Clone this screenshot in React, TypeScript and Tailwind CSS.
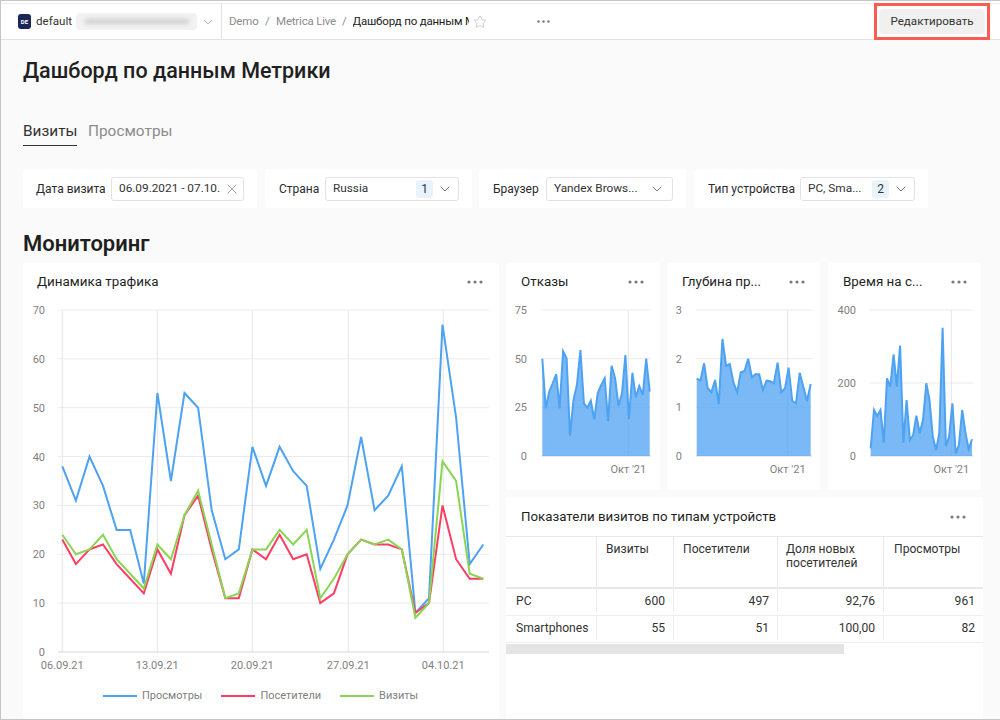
import React from "react";
import { ChevronDown, Star, X } from "lucide-react";

const views = [38,31,40,34,25,25,14,53,35,53,50,29,19,21,42,34,42,37,34,17,23,30,44,29,32,38,8,11,67,48,18,22];
const visitors = [23,18,21,22,18,15,12,21,16,28,32,21,11,11,21,19,24,19,20,10,12,20,23,22,22,21,8,10,30,19,15,15];
const visits = [24,20,21,24,19,16,13,22,19,28,33,22,11,12,21,21,25,22,25,11,15,20,23,22,23,21,7,10,39,35,16,15];

const lineX = (i: number) => 62.3 + i * 13.58;
const lineY = (v: number) => 652 - v * 4.886;
const linePts = (d: number[]) => d.map((v, i) => `${lineX(i).toFixed(1)},${lineY(v).toFixed(1)}`).join(" ");

function Dots({ className = "" }: { className?: string }) {
  return (
    <svg width="16" height="4" viewBox="0 0 16 4" className={className}>
      <circle cx="2" cy="2" r="1.6" fill="#7a7a7a" />
      <circle cx="8" cy="2" r="1.6" fill="#7a7a7a" />
      <circle cx="14" cy="2" r="1.6" fill="#7a7a7a" />
    </svg>
  );
}

function CardHead({ title, pl, pr }: { title: string; pl: string; pr: string }) {
  return (
    <div className={`flex h-[37px] items-center justify-between pt-[1px] ${pl} ${pr}`}>
      <span className="whitespace-nowrap text-[13.4px] text-[#1f1f1f]">{title}</span>
      <Dots />
    </div>
  );
}

function LineChart() {
  const ticks = [0, 10, 20, 30, 40, 50, 60, 70];
  const xt: [number, string][] = [[62.3, "06.09.21"], [157.3, "13.09.21"], [252.3, "20.09.21"], [348.3, "27.09.21"], [443.3, "04.10.21"]];
  return (
    <svg width="476" height="386" viewBox="23 300 476 386" className="block">
      {xt.map(([x]) => (
        <line key={x} x1={x} x2={x} y1="310" y2="652" stroke="#e6e6e6" />
      ))}
      {ticks.map((t) => (
        <g key={t}>
          <line x1="58" x2="489" y1={lineY(t)} y2={lineY(t)} stroke={t === 0 ? "#d6d6d6" : "#ebebeb"} />
          <text x="45" y={lineY(t) + 4} textAnchor="end" fontSize="11" fill="#7f7f7f">{t}</text>
        </g>
      ))}
      {xt.map(([x, l]) => (
        <text key={l} x={x} y="669" textAnchor="middle" fontSize="11" fill="#7f7f7f">{l}</text>
      ))}
      <polyline points={linePts(views)} fill="none" stroke="#4da2f1" strokeWidth="2" />
      <polyline points={linePts(visitors)} fill="none" stroke="#ff3d64" strokeWidth="2" />
      <polyline points={linePts(visits)} fill="none" stroke="#8ad554" strokeWidth="2" />
    </svg>
  );
}

function Legend() {
  const items: [string, string][] = [
    ["Просмотры", "bg-[#4da2f1]"],
    ["Посетители", "bg-[#ff3d64]"],
    ["Визиты", "bg-[#8ad554]"],
  ];
  return (
    <div className="flex h-[20px] items-center gap-[19px] pl-[80px]">
      {items.map(([l, c]) => (
        <div key={l} className="flex items-center gap-[5px]">
          <div className={`h-[2px] w-[34px] ${c}`} />
          <span className="text-[11px] text-[#7f7f7f]">{l}</span>
        </div>
      ))}
    </div>
  );
}

type SparkProps = {
  vb: string;
  w: number;
  x0: number;
  x1: number;
  gridL: number;
  gridR: number;
  labelX: number;
  oct: number;
  zy: number[];
  labels: [string, number][];
};

function Spark({ vb, w, x0, x1, gridL, gridR, labelX, oct, zy, labels }: SparkProps) {
  const step = (x1 - x0) / (zy.length - 1);
  const pts = zy.map((z, i) => `${(x0 + i * step).toFixed(1)},${(260 + z / 3).toFixed(1)}`);
  return (
    <svg width={w} height="190" viewBox={vb} className="block">
      {labels.map(([l, y]) => (
        <g key={l}>
          <line x1={gridL} x2={gridR} y1={y} y2={y} stroke={y === 456 ? "#d6d6d6" : "#ebebeb"} />
          <text x={labelX} y={y + 4} textAnchor="end" fontSize="11" fill="#7f7f7f">{l}</text>
        </g>
      ))}
      <line x1={oct} x2={oct} y1="310" y2="456" stroke="#e6e6e6" />
      <polygon points={`${x0},456 ${pts.join(" ")} ${x1},456`} fill="#4da2f1" fillOpacity="0.75" />
      <polyline points={pts.join(" ")} fill="none" stroke="#4da2f1" strokeWidth="2" />
      <text x={oct} y="473" textAnchor="middle" fontSize="11" fill="#7f7f7f">Окт '21</text>
    </svg>
  );
}

function FilterCard({ label, width, ctrl, pl, children }: { label: string; width: string; ctrl: string; pl: string; children: React.ReactNode }) {
  return (
    <div className={`flex h-[39px] items-center justify-between rounded-[3px] bg-white pr-[13px] ${pl} ${width}`}>
      <span className="whitespace-nowrap text-[12px] text-[#2b2b2b]">{label}</span>
      <div className={`flex h-[24px] items-center rounded-[3px] border border-[#e2e2e2] pl-[7px] text-[11.8px] text-[#333] ${ctrl}`}>
        {children}
      </div>
    </div>
  );
}

const Count = ({ n }: { n: number }) => (
  <span className="flex h-[18px] w-[17px] items-center justify-center rounded-[3px] bg-[#e8f3fd] text-[12px] text-[#333]">{n}</span>
);
const Chev = () => <ChevronDown size={16} strokeWidth={1.2} className="text-[#555]" />;

const cols = "grid grid-cols-[91px_77px_104px_106px_99px]";
const rows = [
  ["PC", "600", "497", "92,76", "961"],
  ["Smartphones", "55", "51", "100,00", "82"],
];

export default function App() {
  return (
    <div
      className="flex h-[720px] w-[1000px] flex-col overflow-hidden border-b border-l border-t border-[#c6c6c6] bg-white pt-[2px]"
      style={{ fontFamily: "Roboto, 'Noto Sans', sans-serif" }}
    >
      <header className="flex h-[37px] shrink-0 items-stretch border-b border-t border-b-[#e2e2e2] border-t-[#ececec]">
        <div className="flex w-[221px] shrink-0 items-center border-r border-[#e2e2e2] pl-[17px]">
          <div className="flex h-[15px] w-[13px] items-center justify-center rounded-[3px] bg-[#1b2557] text-[6px] font-bold leading-none text-white">DE</div>
          <span className="ml-[5px] w-[40px] text-[11.6px] text-[#333]">default</span>
          <div className="flex h-[17px] w-[121px] items-center justify-center rounded-[4px] bg-[#f2f2f2]">
            <div className="h-[5px] w-[104px] bg-[#cfcfcf] blur-[2px]" />
          </div>
          <ChevronDown size={14} strokeWidth={1} className="ml-[4px] text-[#666]" />
        </div>
        <nav className="flex min-w-0 flex-1 items-center pl-[7px] text-[11.5px] tracking-[-0.2px] text-[#8c8c8c]">
          <span>Demo</span>
          <span className="mx-[6.5px]">/</span>
          <span>Metrica Live</span>
          <span className="mx-[6px]">/</span>
          <span className="w-[116px] overflow-hidden whitespace-nowrap text-[#222]">Дашборд по данным Метрики</span>
          <Star size={14} strokeWidth={1} className="ml-[4px] text-[#aaa]" />
          <svg width="13" height="3" viewBox="0 0 13 3" className="ml-[50px]">
            <circle cx="1.5" cy="1.5" r="1.2" fill="#7a7a7a" />
            <circle cx="6.5" cy="1.5" r="1.2" fill="#7a7a7a" />
            <circle cx="11.5" cy="1.5" r="1.2" fill="#7a7a7a" />
          </svg>
        </nav>
        <div className="-my-[1px] mr-[10px] flex w-[116px] items-center justify-center border-[3px] border-[#fb5b50]">
          <button className="h-[25px] w-[106px] rounded-[4px] bg-[#f0f0f0] text-[11.6px] text-[#333]">Редактировать</button>
        </div>
      </header>

      <main className="min-h-0 flex-1 bg-[#fafafa] pl-[22px]">
        <h1 className="mt-[17px] h-[28px] text-[21.5px] font-medium leading-[28px] text-[#1f1f1f]">Дашборд по данным Метрики</h1>
        <div className="mt-[35px] flex gap-[11px] text-[15.4px] leading-[22px]">
          <div className="w-[54px] whitespace-nowrap border-b border-[#333] pb-[3px] text-[#333]">Визиты</div>
          <div className="text-[#8c8c8c]">Просмотры</div>
        </div>
        <div className="mt-[23px] flex">
          <FilterCard label="Дата визита" pl="pl-[13px]" width="w-[234px]" ctrl="w-[133px]">
            <span className="flex-1 overflow-hidden whitespace-nowrap">06.09.2021 - 07.10.</span>
            <X size={16} strokeWidth={1.4} className="mr-[3px] shrink-0 text-[#999]" />
          </FilterCard>
          <FilterCard label="Страна" pl="pl-[14px]" width="ml-[8px] w-[207px]" ctrl="w-[134px]">
            <span className="flex-1">Russia</span>
            <Count n={1} />
            <span className="ml-[4px] mr-[5px]"><Chev /></span>
          </FilterCard>
          <FilterCard label="Браузер" pl="pl-[14px]" width="ml-[7px] w-[207px]" ctrl="w-[127px]">
            <span className="flex-1 whitespace-nowrap">Yandex Brows...</span>
            <span className="mr-[7px]"><Chev /></span>
          </FilterCard>
          <FilterCard label="Тип устройства" pl="pl-[14px]" width="ml-[8px] w-[234px]" ctrl="w-[115px]">
            <span className="flex-1 whitespace-nowrap">PC, Sma...</span>
            <Count n={2} />
            <span className="ml-[4px] mr-[5px]"><Chev /></span>
          </FilterCard>
        </div>
        <h2 className="mt-[22px] h-[28px] text-[22px] font-semibold leading-[28px] text-[#1f1f1f]">Мониторинг</h2>
        <div className="mt-[5px] flex gap-[7px]">
          <section className="h-[455px] w-[476px] rounded-[3px] bg-white">
            <CardHead title="Динамика трафика" pl="pl-[14px]" pr="pr-[16px]" />
            <LineChart />
            <Legend />
          </section>
          <div className="w-[477px]">
            <div className="flex">
              <section className="h-[227px] w-[154px] rounded-[3px] bg-white">
                <CardHead title="Отказы" pl="pl-[15px]" pr="pr-[16px]" />
                <Spark vb="506 300 154 190" w={154} x0={542.3} x1={649.7} gridL={541} gridR={651} labelX={527} oct={628.3}
                  labels={[["75", 310], ["50", 358.7], ["25", 407.3], ["0", 456]]}
                  zy={[296,445,395,370,342,445,274,295,527,420,375,270,430,443,422,478,400,375,355,483,317,355,437,400,285,478,338,412,378,405,296,395]} />
              </section>
              <section className="ml-[7px] h-[227px] w-[153px] rounded-[3px] bg-white">
                <CardHead title="Глубина пр..." pl="pl-[15px]" pr="pr-[15px]" />
                <Spark vb="667 300 153 190" w={153} x0={696.7} x1={810.7} gridL={696} gridR={812} labelX={682} oct={787.7}
                  labels={[["3", 310], ["2", 358.7], ["1", 407.3], ["0", 456]]}
                  zy={[356,362,310,385,397,360,432,237,318,312,368,397,337,333,296,352,343,343,390,362,364,370,308,397,385,323,423,430,338,380,423,372]} />
              </section>
              <section className="ml-[8px] h-[227px] w-[153px] rounded-[3px] bg-white">
                <CardHead title="Время на с..." pl="pl-[15px]" pr="pr-[14px]" />
                <Spark vb="828 300 153 190" w={153} x0={870.7} x1={972} gridL={870} gridR={973} labelX={856} oct={951.3}
                  labels={[["400", 310], ["200", 383], ["0", 456]]}
                  zy={[565,450,468,450,548,355,380,283,380,257,548,420,540,525,467,520,480,370,420,530,570,520,203,558,530,430,580,555,450,520,568,538]} />
              </section>
            </div>
            <section className="mt-[7px] h-[240px] rounded-[3px] bg-white">
              <div className="flex h-[39px] items-center justify-between pl-[15px] pr-[17px]">
                <span className="text-[13.3px] text-[#1f1f1f]">Показатели визитов по типам устройств</span>
                <Dots />
              </div>
              <div className="text-[12.1px] leading-[14px] text-[#333]">
                <div className={`${cols} h-[53px] border-b-2 border-t border-[#e8e8e8]`}>
                  <div className="border-r border-[#e8e8e8]" />
                  <div className="border-r border-[#e8e8e8] pl-[9px] pt-[5px]">Визиты</div>
                  <div className="border-r border-[#e8e8e8] pl-[9px] pt-[5px]">Посетители</div>
                  <div className="border-r border-[#e8e8e8] pl-[8px] pt-[5px]">Доля новых посетителей</div>
                  <div className="pl-[10px] pt-[5px]">Просмотры</div>
                </div>
                {rows.map((r) => (
                  <div key={r[0]} className={`${cols} h-[27px] border-b border-[#eeeeee] pb-[2px]`}>
                    <div className="flex items-center border-r border-[#eeeeee] pl-[10px]">{r[0]}</div>
                    {r.slice(1).map((c, i) => (
                      <div key={i} className={`flex items-center justify-end ${i < 3 ? "border-r border-[#eeeeee] pr-[8px]" : "pr-[8px]"}`}>{c}</div>
                    ))}
                  </div>
                ))}
                <div className="mt-[1px] h-[10px] w-[338px] bg-[#e4e4e4]" />
              </div>
            </section>
          </div>
        </div>
      </main>
    </div>
  );
}
